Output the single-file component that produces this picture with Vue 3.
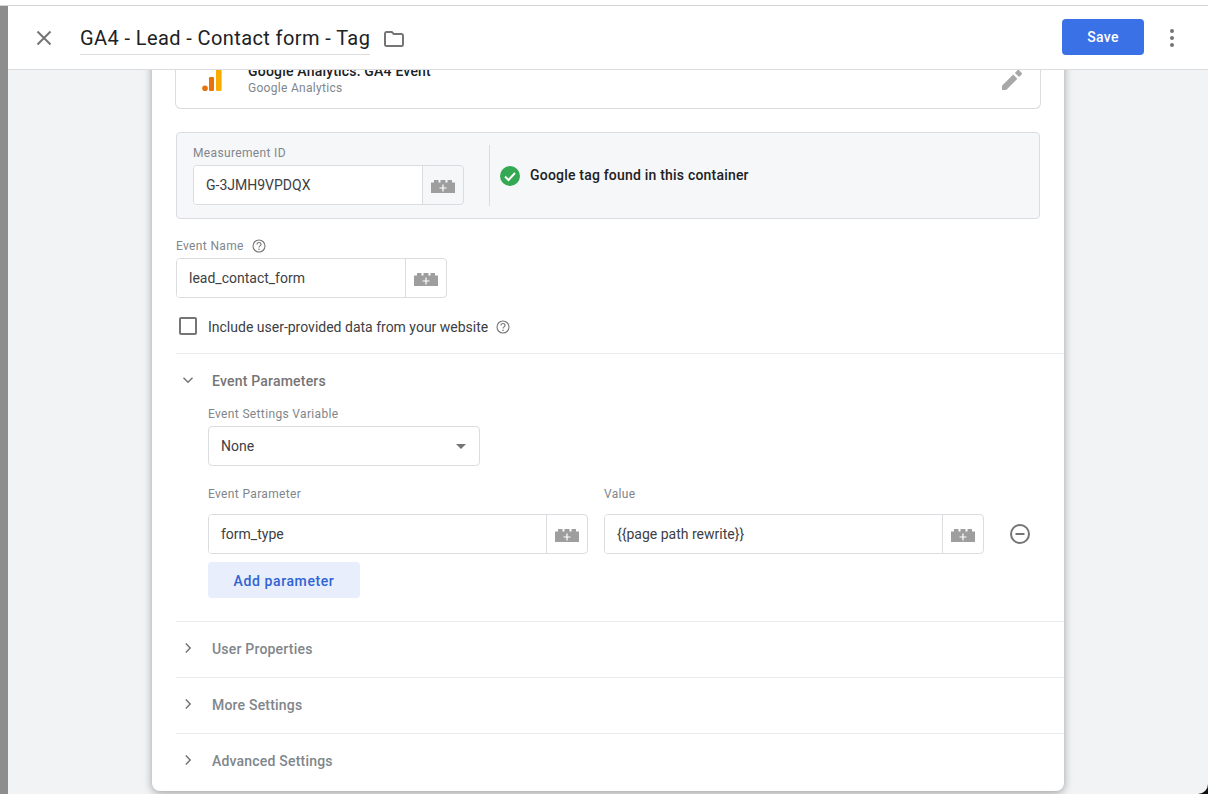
<script setup>
const sections = ['User Properties', 'More Settings', 'Advanced Settings']
const valorParam = '{' + '{page path rewrite}' + '}'
</script>

<template>
  <div class="pagina">
    <div class="tira"></div>
    <div class="panel">
      <header class="cabecera">
        <svg class="cerrar" viewBox="0 0 16 16"><path d="M1.5 1.5l13 13M14.5 1.5l-13 13" /></svg>
        <h1 class="titulo">GA4 - Lead - Contact form - Tag</h1>
        <svg class="carpeta" viewBox="0 0 20 16"><path d="M1 2.5c0-.8.6-1.5 1.4-1.5h5.4l2 2h7.8c.8 0 1.4.7 1.4 1.5v9c0 .8-.6 1.5-1.4 1.5H2.4C1.6 15 1 14.3 1 13.5z" /></svg>
        <button class="guardar">Save</button>
        <div class="puntos"><i></i><i></i><i></i></div>
      </header>

      <main class="contenido">
        <section class="tarjeta">
          <div class="tipo">
            <svg class="logo-ga" viewBox="0 0 20 26">
              <rect x="14" y="0" width="5.6" height="26" rx="1.5" fill="#f9ab00" />
              <rect x="7" y="12" width="5" height="14" rx="1.2" fill="#e8710a" />
              <circle cx="3" cy="23.2" r="2.8" fill="#e8710a" />
            </svg>
            <div class="tipo-texto">
              <div class="tipo-nombre">Google Analytics: GA4 Event</div>
              <div class="tipo-sub">Google Analytics</div>
            </div>
            <svg class="lapiz" viewBox="0 0 20 20"><path d="M0 15.8V20h4.2L15.4 8.8l-4.2-4.2zM19.7 4.5c.4-.4.4-1.1 0-1.6L17.1.3c-.4-.4-1.100-.4-1.600 0l-2.600 2.600 4.200 4.200z" /></svg>
          </div>

          <div class="medicion">
            <div class="medicion-campo">
              <label class="etiqueta">Measurement ID</label>
              <div class="campo ancho-id">
                <span class="valor">G-3JMH9VPDQX</span>
                <span class="ladrillo-caja">
                  <svg class="ladrillo" viewBox="0 0 24 13"><path d="M0 2.5h3V0h4.5v2.5h2V0h5v2.5h2V0H21v2.5h3V13H0z" fill="#9e9e9e" /><path d="M12 4.5v7M8.500 8h7" stroke="#fff" stroke-width="1.200" /></svg>
                </span>
              </div>
            </div>
            <div class="medicion-estado">
              <svg class="check" viewBox="0 0 20 20"><circle cx="10" cy="10" r="10" fill="#34a853" /><path d="M5 10.500l3.500 3.500L15 7" fill="none" stroke="#fff" stroke-width="2" /></svg>
              <span class="estado-texto">Google tag found in this container</span>
            </div>
          </div>

          <div class="nombre-evento">
            <label class="etiqueta">Event Name
              <svg class="ayuda" viewBox="0 0 14 14"><circle cx="7" cy="7" r="6" /><path d="M5 5.500c0-1.200.9-2 2-2s2 .8 2 1.900c0 1.500-2 1.500-2 3.100" /><circle class="punto" cx="7" cy="10.300" r=".8" /></svg>
            </label>
            <div class="campo ancho-nombre">
              <span class="valor">lead_contact_form</span>
              <span class="ladrillo-caja">
                <svg class="ladrillo" viewBox="0 0 24 13"><path d="M0 2.5h3V0h4.5v2.5h2V0h5v2.5h2V0H21v2.5h3V13H0z" fill="#9e9e9e" /><path d="M12 4.500v7M8.500 8h7" stroke="#fff" stroke-width="1.200" /></svg>
              </span>
            </div>
          </div>

          <div class="casilla-fila">
            <span class="casilla"></span>
            <span class="casilla-texto">Include user-provided data from your website</span>
            <svg class="ayuda" viewBox="0 0 14 14"><circle cx="7" cy="7" r="6" /><path d="M5 5.500c0-1.200.9-2 2-2s2 .8 2 1.900c0 1.500-2 1.500-2 3.100" /><circle class="punto" cx="7" cy="10.300" r=".8" /></svg>
          </div>

          <div class="seccion abierta">
            <div class="seccion-cabeza">
              <svg class="flecha" viewBox="0 0 12 12"><path d="M1.500 3.800L6 8.200l4.500-4.400" /></svg>
              <span>Event Parameters</span>
            </div>
            <div class="seccion-cuerpo">
              <label class="etiqueta">Event Settings Variable</label>
              <div class="selector">
                <span>None</span>
                <i class="triangulo"></i>
              </div>

              <div class="parametros">
                <div>
                  <label class="etiqueta">Event Parameter</label>
                  <div class="campo ancho-param">
                    <span class="valor">form_type</span>
                    <span class="ladrillo-caja">
                      <svg class="ladrillo" viewBox="0 0 24 13"><path d="M0 2.5h3V0h4.5v2.5h2V0h5v2.5h2V0H21v2.5h3V13H0z" fill="#9e9e9e" /><path d="M12 4.500v7M8.500 8h7" stroke="#fff" stroke-width="1.200" /></svg>
                    </span>
                  </div>
                </div>
                <div>
                  <label class="etiqueta">Value</label>
                  <div class="campo ancho-param">
                    <span class="valor">{{ valorParam }}</span>
                    <span class="ladrillo-caja">
                      <svg class="ladrillo" viewBox="0 0 24 13"><path d="M0 2.5h3V0h4.5v2.5h2V0h5v2.5h2V0H21v2.5h3V13H0z" fill="#9e9e9e" /><path d="M12 4.500v7M8.500 8h7" stroke="#fff" stroke-width="1.200" /></svg>
                    </span>
                  </div>
                </div>
                <svg class="quitar" viewBox="0 0 20 20"><circle cx="10" cy="10" r="9" /><path d="M5.500 10h9" /></svg>
              </div>

              <button class="agregar">Add parameter</button>
            </div>
          </div>

          <div v-for="s in sections" :key="s" class="seccion">
            <div class="seccion-cabeza cerrada">
              <svg class="flecha" viewBox="0 0 12 12"><path d="M3.800 1.500L8.200 6l-4.400 4.500" /></svg>
              <span>{{ s }}</span>
            </div>
          </div>
        </section>
      </main>
    </div>
  </div>
</template>

<style>
html, body { margin: 0; background: #111; overflow: hidden; }
</style>

<style scoped>
.pagina { display: flex; height: 794px; width: 1208px; background: #111; font-family: Roboto, "Liberation Sans", sans-serif; color: #202124; box-sizing: border-box; border-top: 5px solid #fff; position: relative; }
.tira { width: 8px; background: #8d8d8d; border-top: 1px solid #d4d4d4; flex: none; }
.panel { flex: 1; display: flex; flex-direction: column; background: #f1f3f4; border-bottom-right-radius: 10px; overflow: hidden; }

.cabecera { height: 65px; flex: none; box-sizing: border-box; background: #fff; border-top: 1px solid #d4d4d4; border-bottom: 1px solid #dadce0; display: flex; align-items: center; position: relative; z-index: 2; padding: 0 34px 0 28px; }
.cerrar { width: 16px; height: 16px; fill: none; stroke: #757575; stroke-width: 2; }
.titulo { margin: 1px 0 0 28px; padding-top: 2px; font-size: 20px; font-weight: 400; line-height: 31px; letter-spacing: .4px; border-bottom: 1px solid #dadce0; color: #202124; white-space: nowrap; }
.carpeta { width: 20px; height: 16px; margin-left: 14px; margin-top: 2px; fill: none; stroke: #757575; stroke-width: 2; }
.guardar { margin-left: auto; margin-bottom: 2px; width: 82px; height: 36px; background: #3a71e6; color: #fff; border: none; border-radius: 4px; font-family: inherit; font-size: 14px; font-weight: 500; letter-spacing: .25px; }
.puntos { margin-left: 26px; width: 4px; display: flex; flex-direction: column; gap: 3px; }
.puntos i { width: 4px; height: 4px; border-radius: 50%; background: #757575; }

.contenido { flex: 1; overflow: hidden; padding-left: 144px; }
.tarjeta { width: 912px; height: 756px; margin-top: -35px; background: #fff; border-radius: 8px; box-shadow: 0 2px 8px rgba(0, 0, 0, .35); box-sizing: border-box; padding: 0 0 0 24px; }

.tipo { width: 866px; height: 74px; margin-left: -1px; box-sizing: border-box; border: 1px solid #dadce0; border-top: none; border-radius: 0 0 6px 6px; display: flex; align-items: flex-end; padding: 0 18px 12px 26px; }
.logo-ga { width: 20px; height: 26px; margin-bottom: 5px; flex: none; }
.tipo-texto { margin-left: 26px; }
.tipo-nombre { font-size: 14px; font-weight: 500; line-height: 18px; letter-spacing: .2px; }
.tipo-sub { font-size: 12px; color: #80868b; line-height: 16px; letter-spacing: .3px; }
.lapiz { margin-left: auto; width: 20px; height: 20px; fill: #a8a8a8; margin-bottom: 6px; }

.medicion { width: 864px; height: 87px; margin-top: 23px; box-sizing: border-box; background: #f6f7f8; border: 1px solid #dadce0; border-radius: 4px; display: flex; padding: 12px 16px 12px 16px; }
.medicion-campo { width: 296px; border-right: 1px solid #dadce0; }
.medicion-campo .etiqueta { margin-bottom: 4px; }
.medicion-estado { display: flex; align-items: center; gap: 10px; margin-left: 10px; font-size: 14px; font-weight: 500; letter-spacing: .2px; }
.estado-texto { margin-top: -2px; }
.check { width: 20px; height: 20px; }

.etiqueta { display: flex; align-items: center; gap: 8px; font-size: 12px; line-height: 16px; letter-spacing: .35px; color: #80868b; }
.campo { display: flex; height: 40px; box-sizing: border-box; border: 1px solid #dadce0; border-radius: 4px; align-items: stretch; }
.valor { flex: 1; padding-left: 12px; font-size: 14px; line-height: 38px; color: #3c4043; background: #fff; border-radius: 3px 0 0 3px; }
.ladrillo-caja { width: 41px; flex: none; box-sizing: border-box; border-left: 1px solid #dadce0; display: flex; align-items: center; justify-content: center; }
.ladrillo { width: 24px; height: 13px; margin-top: 3px; }
.ancho-id { width: 271px; }
.ancho-nombre { width: 271px; }
.ancho-param { width: 380px; }

.nombre-evento { margin-top: 19px; }
.nombre-evento .etiqueta { height: 16px; margin-bottom: 4px; }
.ayuda { width: 14px; height: 14px; fill: none; stroke: #757575; stroke-width: 1.1; }
.ayuda .punto { fill: #757575; stroke: none; }

.casilla-fila { display: flex; align-items: center; height: 20px; margin-top: 19px; margin-left: 3px; font-size: 14px; color: #3c4043; }
.casilla { width: 18px; height: 18px; box-sizing: border-box; border: 2px solid #757575; border-radius: 2px; margin-top: -3px; }
.casilla-texto { margin-left: 11px; margin-right: 8px; }

.seccion { border-top: 1px solid #e8eaed; }
.abierta { margin-top: 16px; }
.seccion-cabeza { height: 55px; box-sizing: border-box; padding: 0 0 2px 6px; display: flex; align-items: center; font-size: 14px; font-weight: 500; color: #80868b; letter-spacing: .2px; }
.seccion-cabeza span { margin-left: 18px; }
.flecha { width: 12px; height: 12px; margin-top: -2px; fill: none; stroke: #757575; stroke-width: 1.5; }
.abierta .seccion-cabeza { color: #757575; }
.seccion-cuerpo { padding: 0 0 23px 32px; margin-top: -3px; }
.seccion-cuerpo > .etiqueta { margin-bottom: 4px; }
.selector { width: 272px; height: 40px; box-sizing: border-box; border: 1px solid #dadce0; border-radius: 4px; display: flex; align-items: center; justify-content: space-between; padding: 0 13px 0 12px; font-size: 14px; color: #3c4043; }
.triangulo { width: 0; height: 0; border-left: 5px solid transparent; border-right: 5px solid transparent; border-top: 5px solid #757575; }
.parametros { display: flex; gap: 16px; margin-top: 20px; }
.parametros .etiqueta { margin-bottom: 12px; }
.quitar { width: 20px; height: 20px; margin-top: 38px; margin-left: 10px; fill: none; stroke: #757575; stroke-width: 2; }
.agregar { display: block; width: 152px; height: 36px; margin-top: 8px; padding: 2px 0 0; border: none; border-radius: 4px; background: #e8eefb; color: #2f63d4; font-family: inherit; font-size: 14px; font-weight: 500; letter-spacing: .6px; }
</style>
